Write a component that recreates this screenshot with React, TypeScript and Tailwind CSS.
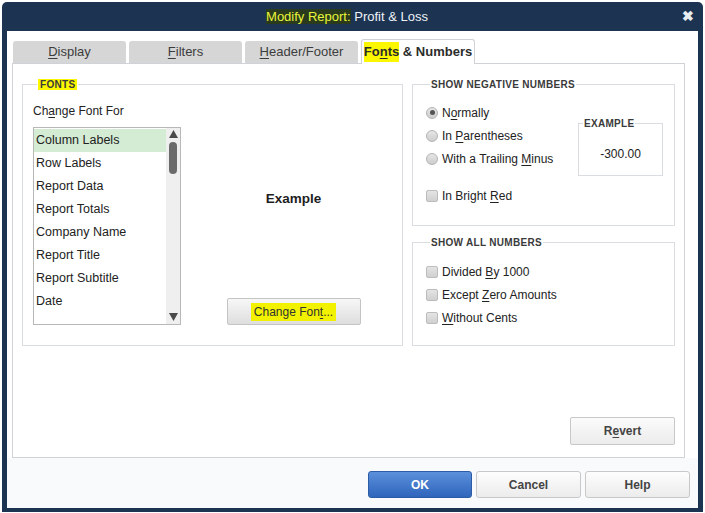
import type { ReactNode } from 'react';

const font = { fontFamily: '"Liberation Sans", Arial, sans-serif' };

function U({ children }: { children: ReactNode }) {
  return <span className="underline underline-offset-2">{children}</span>;
}

function Radio({ checked }: { checked?: boolean }) {
  return (
    <span className="flex h-[12px] w-[12px] items-center justify-center rounded-full border border-[#b4b4b4] bg-gradient-to-b from-[#e6e6e6] to-[#cdcdcd]">
      {checked && <span className="h-[5px] w-[5px] rounded-full bg-[#555]" />}
    </span>
  );
}

function Check() {
  return <span className="h-[12px] w-[12px] rounded-[2px] border border-[#bcbcbc] bg-gradient-to-b from-[#e4e4e4] to-[#d0d0d0]" />;
}

function Group({ title, className, children }: { title: ReactNode; className?: string; children: ReactNode }) {
  return (
    <fieldset className={`border border-[#d9dce0] ${className ?? ''}`}>
      <legend className="ml-[4px] px-[1px] text-[10px] font-bold tracking-[0.3px] text-[#3a3a3a]">{title}</legend>
      {children}
    </fieldset>
  );
}

const tabs = [
  { label: <><U>D</U>isplay</> },
  { label: <><U>F</U>ilters</> },
  { label: <><U>H</U>eader/Footer</> },
];

const fontItems = ['Column Labels', 'Row Labels', 'Report Data', 'Report Totals', 'Company Name', 'Report Title', 'Report Subtitle', 'Date'];

export default function App() {
  return (
    <div className="h-[513px] w-[705px] bg-white pl-[2px] pr-[2px] pt-[2px] pb-[1px]" style={font}>
      <div className="flex h-full flex-col rounded-t-[5px] bg-[#1c3452] px-[5px] pb-[4px]">
        {/* title bar */}
        <div className="flex h-[29px] items-center pl-[5px] pr-[4px]">
          <div className="flex-1 text-center text-[13px] text-[#eef2f6]">
            <span className="bg-[#2a3a1c] text-[#e8f53a]">Modify Report:</span> Profit &amp; Loss
          </div>
          <span className="text-[14px] font-bold text-[#e8edf2]">✖</span>
        </div>

        {/* body */}
        <div className="flex flex-1 flex-col bg-white">
          <div className="pl-[5px] pr-[13px] pt-[8px]">
            <div className="flex items-end gap-[3px] pl-[1px]">
              {tabs.map((t, i) => (
                <div key={i} className="flex h-[22px] w-[113px] items-center justify-center rounded-t-[3px] bg-[#d6d6d6] text-[13px] text-[#3c3c3c]">
                  {t.label}
                </div>
              ))}
              <div className="relative z-10 -mb-px flex h-[25px] w-[114px] items-center justify-center whitespace-nowrap rounded-t-[3px] border border-b-0 border-[#cfd3d8] bg-white text-[13px] font-bold text-[#2c2c2c]">
                <span className="bg-[#fbf700]">Fo<U>n</U>ts</span>&nbsp;&amp; Numbers
              </div>
            </div>

            {/* panel */}
            <div className="flex h-[395px] flex-col border border-[#cfd3d8] px-[9px] pt-[13px]">
              <div className="flex gap-[9px]">
                <Group
                  className="h-[269px] w-[381px] px-[10px]"
                  title={<span className="bg-[#fbf700] px-[2px]">FONTS</span>}
                >
                  <div className="mt-[10px] text-[12px] text-[#222]">Ch<U>a</U>nge Font For</div>
                  <div className="flex">
                    <div className="mt-[7px] flex h-[198px] w-[148px] border border-[#b8b8b8]">
                      <div className="flex-1 pt-px">
                        {fontItems.map((f, i) => (
                          <div
                            key={f}
                            className={`flex h-[23px] items-center pl-[2px] text-[12.5px] text-[#222] ${i === 0 ? 'bg-[#d4ebd4]' : ''}`}
                          >
                            {f}
                          </div>
                        ))}
                      </div>
                      <div className="flex w-[14px] flex-col items-center bg-[#efefef] pt-[2px]">
                        <svg width="9" height="8" viewBox="0 0 9 8"><path d="M4.5 0 L9 8 L0 8Z" fill="#4a4a4a" /></svg>
                        <span className="mt-[4px] h-[32px] w-[8px] rounded-full bg-[#6b6b6b]" />
                        <span className="flex-1" />
                        <svg className="mb-[3px]" width="9" height="8" viewBox="0 0 9 8"><path d="M0 0 L9 0 L4.5 8Z" fill="#4a4a4a" /></svg>
                      </div>
                    </div>
                    <div className="flex flex-1 flex-col items-center pl-[14px]">
                      <div className="mt-[69px] text-[13.5px] font-bold text-[#1e1e1e]">Example</div>
                      <span className="flex-1" />
                      <button className="flex h-[27px] w-[134px] items-center justify-center rounded-[2px] border border-[#c4c4c4] bg-gradient-to-b from-[#f7f7f7] to-[#dedede] text-[12px] text-[#333]">
                        <span className="bg-[#f2f200] px-[3px]">Change Fon<U>t</U>...</span>
                      </button>
                    </div>
                  </div>
                </Group>

                <div className="flex flex-1 flex-col gap-[9px]">
                  <Group className="h-[149px] pl-[13px] pr-[11px]" title="SHOW NEGATIVE NUMBERS">
                    <div className="flex">
                      <div className="mt-[9px] flex flex-col text-[12px] text-[#222]">
                        <label className="flex h-[23px] items-center gap-[4px]"><Radio checked /><span>N<U>o</U>rmally</span></label>
                        <label className="flex h-[23px] items-center gap-[4px]"><Radio /><span>In <U>P</U>arentheses</span></label>
                        <label className="flex h-[23px] items-center gap-[4px]"><Radio /><span>With a Trailing <U>M</U>inus</span></label>
                        <label className="mt-[14px] flex h-[23px] items-center gap-[4px]"><Check /><span>In Bright <U>R</U>ed</span></label>
                      </div>
                      <span className="flex-1" />
                      <Group className="mt-[24px] flex h-[60px] w-[85px] items-start justify-center" title="EXAMPLE">
                        <div className="mt-[14px] text-[12px] text-[#222]">-300.00</div>
                      </Group>
                    </div>
                  </Group>
                  <Group className="h-[111px] pl-[13px]" title="SHOW ALL NUMBERS">
                    <div className="mt-[10px] flex flex-col text-[12px] text-[#222]">
                      <label className="flex h-[23px] items-center gap-[4px]"><Check /><span>Divided <U>B</U>y 1000</span></label>
                      <label className="flex h-[23px] items-center gap-[4px]"><Check /><span>Except <U>Z</U>ero Amounts</span></label>
                      <label className="flex h-[23px] items-center gap-[4px]"><Check /><span><U>W</U>ithout Cents</span></label>
                    </div>
                  </Group>
                </div>
              </div>

              <div className="flex flex-1 items-end justify-end pb-[12px]">
                <button className="flex h-[28px] w-[105px] items-center justify-center rounded-[2px] border border-[#c8c8c8] bg-gradient-to-b from-[#fbfbfb] to-[#ececec] text-[12px] font-bold text-[#444]">
                  R<U>e</U>vert
                </button>
              </div>
            </div>
          </div>

          {/* footer */}
          <div className="flex flex-1 items-start justify-end gap-[4px] bg-[#f9fafb] pr-[8px] pt-[13px]">
            <button className="flex h-[27px] w-[104px] items-center justify-center rounded-[3px] border border-[#2d5ca6] bg-gradient-to-b from-[#5b90dc] to-[#2f65bb] text-[12px] font-bold text-white">
              OK
            </button>
            <button className="flex h-[27px] w-[105px] items-center justify-center rounded-[3px] border border-[#c8c8c8] bg-gradient-to-b from-[#fdfdfd] to-[#ececec] text-[12px] font-bold text-[#444]">
              Cancel
            </button>
            <button className="flex h-[27px] w-[105px] items-center justify-center rounded-[3px] border border-[#c8c8c8] bg-gradient-to-b from-[#fdfdfd] to-[#ececec] text-[12px] font-bold text-[#444]">
              Help
            </button>
          </div>
        </div>
      </div>
    </div>
  );
}
